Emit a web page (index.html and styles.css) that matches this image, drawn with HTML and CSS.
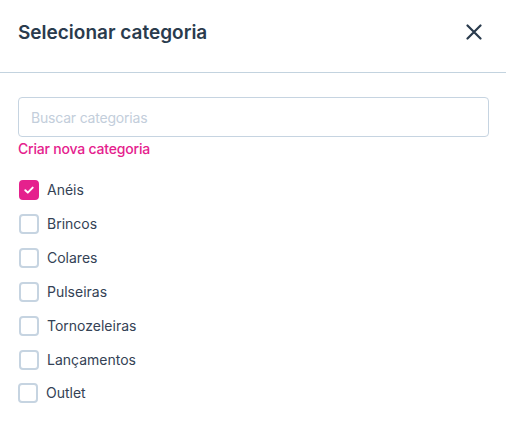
FILE: index.html
```html
<!DOCTYPE html>
<html lang="pt-BR">
  <head>
    <meta charset="UTF-8" />
    <title>Selecionar categoria</title>
    <link rel="stylesheet" href="styles.css">
  </head>
  <body>
    <div class="modal">
      <div class="modal-header">
        <div class="modal-title">Selecionar categoria</div>
        <button class="close-btn" aria-label="Fechar">
          <svg width="16" height="16" viewBox="0 0 16 16">
            <path d="M1.5 1.5L14.5 14.5M14.5 1.5L1.5 14.5" stroke="#2a3b4d" stroke-width="2.2" stroke-linecap="round" fill="none" />
          </svg>
        </button>
      </div>
      <div class="modal-body">
        <input type="text" class="search" placeholder="Buscar categorias" />
        <a class="new-cat" href="#">Criar nova categoria</a>
        <div class="cat-list">
          <label class="cat">
            <span class="box checked">
              <svg width="12" height="12" viewBox="0 0 12 12">
                <path d="M2.3 6.2L4.8 8.6L9.7 3.6" stroke="#fff" stroke-width="2" stroke-linecap="round" stroke-linejoin="round" fill="none" />
              </svg>
            </span>
            Anéis
          </label>
          <label class="cat"><span class="box"></span>Brincos</label>
          <label class="cat"><span class="box"></span>Colares</label>
          <label class="cat"><span class="box"></span>Pulseiras</label>
          <label class="cat"><span class="box"></span>Tornozeleiras</label>
          <label class="cat"><span class="box"></span>Lançamentos</label>
          <label class="cat outlet"><span class="box"></span>Outlet</label>
        </div>
      </div>
    </div>
  </body>
</html>
```

FILE: styles.css
```css
body {
  margin: 0;
  background: #fff;
  font-family: Inter, "Noto Sans", Arial, sans-serif;
  color: #344255;
}
.modal {
  width: 506px;
  height: 424px;
  background: #fff;
}
.modal-header {
  height: 73px;
  box-sizing: border-box;
  border-bottom: 1px solid #c3d3df;
  display: flex;
  align-items: center;
  justify-content: space-between;
  padding: 0 18px;
}
.modal-title {
  font-size: 19px;
  font-weight: 600;
  color: #2a3b4d;
  padding-bottom: 8px;
}
.close-btn {
  border: none;
  background: none;
  padding: 0;
  width: 16px;
  height: 16px;
  margin-right: 6px;
  margin-bottom: 9px;
  cursor: pointer;
  display: flex;
}
.modal-body {
  padding: 24px 17px 0 18px;
  display: flex;
  flex-direction: column;
}
.search {
  height: 40px;
  box-sizing: border-box;
  border: 1px solid #c6d4e1;
  border-radius: 4px;
  padding: 0 12px;
  font-family: inherit;
  font-size: 14px;
  letter-spacing: -0.2px;
  color: #344255;
  outline: none;
}
.search::placeholder {
  color: #c3cedb;
}
.new-cat {
  margin-top: 2px;
  line-height: 20px;
  font-size: 14px;
  font-weight: 500;
  letter-spacing: -0.2px;
  color: #e5218d;
  text-decoration: none;
  align-self: flex-start;
}
.cat-list {
  margin-top: 21px;
  display: flex;
  flex-direction: column;
  gap: 14px;
}
.cat {
  display: flex;
  align-items: center;
  gap: 8px;
  font-size: 14px;
  line-height: 20px;
  color: #344255;
  padding-left: 1px;
}
.cat.outlet {
  padding-left: 0;
  margin-top: -1px;
}
.box {
  width: 20px;
  height: 20px;
  box-sizing: border-box;
  border: 2px solid #c6d4e1;
  border-radius: 4px;
  display: flex;
  align-items: center;
  justify-content: center;
}
.box.checked {
  background: #e5218d;
  border-color: #e5218d;
}
```
